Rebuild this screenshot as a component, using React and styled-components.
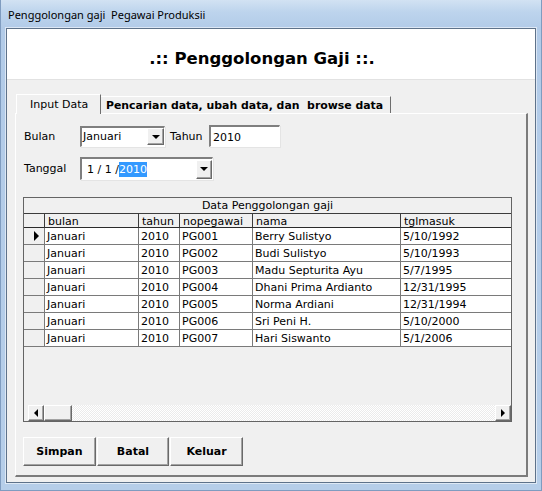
import styled, { createGlobalStyle } from 'styled-components';

const GlobalStyle = createGlobalStyle`
  html, body {
    margin: 0;
    padding: 0;
  }
  body {
    width: 542px;
    height: 491px;
    overflow: hidden;
    font-family: 'DejaVu Sans', Tahoma, sans-serif;
    color: #000;
  }
`;

const columns = [
  { key: 'ind', title: '', width: 21 },
  { key: 'bulan', title: 'bulan', width: 94 },
  { key: 'tahun', title: 'tahun', width: 41 },
  { key: 'nip', title: 'nopegawai', width: 73 },
  { key: 'nama', title: 'nama', width: 148 },
  { key: 'tgl', title: 'tglmasuk', width: 110 },
];

const rows = [
  ['Januari', '2010', 'PG001', 'Berry Sulistyo', '5/10/1992'],
  ['Januari', '2010', 'PG002', 'Budi Sulistyo', '5/10/1993'],
  ['Januari', '2010', 'PG003', 'Madu Septurita Ayu', '5/7/1995'],
  ['Januari', '2010', 'PG004', 'Dhani Prima Ardianto', '12/31/1995'],
  ['Januari', '2010', 'PG005', 'Norma Ardiani', '12/31/1994'],
  ['Januari', '2010', 'PG006', 'Sri Peni H.', '5/10/2000'],
  ['Januari', '2010', 'PG007', 'Hari Siswanto', '5/1/2006'],
];

const App = () => {
  return (
    <>
      <GlobalStyle />
      <Window>
        <TitleBar>Penggolongan gaji&nbsp; Pegawai Produksii</TitleBar>
        <Client>
          <Header>.:: Penggolongan Gaji ::.</Header>
          <TabArea>
            <TabStrip>
              <Tab $active>Input Data</Tab>
              <Tab>Pencarian data, ubah data, dan&nbsp; browse data</Tab>
            </TabStrip>
            <TabPage>
              <FieldRow $top={11}>
                <Label $w={56}>Bulan</Label>
                <Combo>
                  <FieldText>Januari</FieldText>
                  <DropButton $w={17} $h={17}>
                    <DownArrow />
                  </DropButton>
                </Combo>
                <Label $w={44} $pad={5}>Tahun</Label>
                <TextBox>2010</TextBox>
              </FieldRow>
              <FieldRow $top={10}>
                <Label $w={56}>Tanggal</Label>
                <DatePicker>
                  <FieldText $pad={5}>
                    1 / 1 /<Selected>2010</Selected>
                  </FieldText>
                  <DropButton $w={16} $h={19}>
                    <DownArrow />
                  </DropButton>
                </DatePicker>
              </FieldRow>
              <Grid>
                <Caption>Data Penggolongan gaji</Caption>
                <Cells>
                  {columns.map((c, i) => (
                    <Cell key={c.key} $kind="head" $last={i === columns.length - 1}>
                      {c.title}
                    </Cell>
                  ))}
                  {rows.map((r, ri) => (
                    <Row key={r[2]}>
                      <Cell $kind="ind">{ri === 0 && <Pointer />}</Cell>
                      {r.map((v, ci) => (
                        <Cell key={ci} $kind="data" $last={ci === r.length - 1}>
                          {v}
                        </Cell>
                      ))}
                    </Row>
                  ))}
                </Cells>
                <GridEmpty />
                <ScrollBar>
                  <ScrollButton>
                    <SideArrow $dir="left" />
                  </ScrollButton>
                  <Thumb />
                  <Track />
                  <ScrollButton>
                    <SideArrow $dir="right" />
                  </ScrollButton>
                </ScrollBar>
              </Grid>
              <ButtonRow>
                <Button $w={73}>Simpan</Button>
                <Button $w={72}>Batal</Button>
                <Button $w={73}>Keluar</Button>
              </ButtonRow>
            </TabPage>
          </TabArea>
        </Client>
      </Window>
    </>
  );
};

const Window = styled.div`
  width: 542px;
  height: 491px;
  box-sizing: border-box;
  display: flex;
  flex-direction: column;
  background: linear-gradient(180deg, #d2e2f3 0px, #bdd4ed 12px, #b2cbe8 28px, #b6cee9 100%);
  box-shadow: inset 1px 0 #7f9cc0, inset -1px 0 #7f9cc0, inset 0 -1px #7f9cc0;
`;

const TitleBar = styled.div`
  height: 28px;
  flex-shrink: 0;
  display: flex;
  align-items: center;
  padding-left: 8px;
  font-family: 'Noto Sans', 'DejaVu Sans', sans-serif;
  font-size: 11px;
  white-space: nowrap;
`;

const Client = styled.div`
  margin: 0 6px 8px 6px;
  flex: 1;
  display: flex;
  flex-direction: column;
  border: 1px solid #5e728a;
  background: #f0f0f0;
  box-shadow: 0 0 0 1px rgba(255, 255, 255, 0.55);
`;

const Header = styled.div`
  height: 51px;
  flex-shrink: 0;
  box-sizing: border-box;
  padding: 8px 18px 0 0;
  background: #fff;
  border-bottom: 1px solid #e2e2e2;
  display: flex;
  justify-content: center;
  align-items: center;
  font-size: 16.5px;
  font-weight: bold;
`;

const TabArea = styled.div`
  flex: 1;
  display: flex;
  flex-direction: column;
  padding: 14px 7px 5px 8px;
`;

const TabStrip = styled.div`
  height: 19px;
  display: flex;
  align-items: flex-end;
  padding-left: 1px;
  position: relative;
  z-index: 1;
`;

const Tab = styled.div`
  box-sizing: border-box;
  height: ${p => (p.$active ? 20 : 17)}px;
  width: ${p => (p.$active ? 85 : 290)}px;
  margin-bottom: ${p => (p.$active ? -1 : 0)}px;
  padding-left: ${p => (p.$active ? 13 : 5)}px;
  background: #f0f0f0;
  border-top: 1px solid #fff;
  border-left: ${p => (p.$active ? '1px solid #fff' : 'none')};
  border-right: 1px solid #6e6e6e;
  display: flex;
  align-items: center;
  font-size: ${p => (p.$active ? 11 : 10.9)}px;
  font-weight: ${p => (p.$active ? 'normal' : 'bold')};
  white-space: nowrap;
`;

const TabPage = styled.div`
  flex: 1;
  display: flex;
  flex-direction: column;
  border-top: 1px solid #fff;
  border-left: 1px solid #fff;
  border-right: 2px solid #7b7b7b;
  border-bottom: 2px solid #7b7b7b;
`;

const FieldRow = styled.div`
  display: flex;
  align-items: center;
  margin-top: ${p => p.$top}px;
  padding-left: 8px;
  font-size: 11px;
`;

const Label = styled.span`
  width: ${p => p.$w}px;
  padding-left: ${p => p.$pad || 0}px;
  box-sizing: border-box;
  flex-shrink: 0;
`;

const sunken = `
  box-sizing: border-box;
  background: #fff;
  border-top: 2px solid #7f7f7f;
  border-left: 2px solid #7f7f7f;
  border-right: 1px solid #fff;
  border-bottom: 1px solid #fff;
  box-shadow: 1px 1px 0 #e4e4e4;
  display: flex;
  align-items: center;
`;

const Combo = styled.div`
  ${sunken}
  width: 85px;
  height: 21px;
  justify-content: space-between;
`;

const DatePicker = styled.div`
  ${sunken}
  width: 133px;
  height: 23px;
  justify-content: space-between;
`;

const TextBox = styled.div`
  ${sunken}
  width: 71px;
  height: 22px;
  padding-left: 2px;
  padding-top: 1px;
`;

const FieldText = styled.span`
  padding-left: ${p => p.$pad || 1}px;
  white-space: pre;
`;

const Selected = styled.span`
  background: #3399ff;
  color: #fff;
  padding: 1px 0;
`;

const raised = `
  box-sizing: border-box;
  background: #f0f0f0;
  border: 1px solid;
  border-color: #fff #696969 #696969 #fff;
  box-shadow: inset -1px -1px #a3a3a3;
`;

const DropButton = styled.span`
  ${raised}
  width: ${p => p.$w}px;
  height: ${p => p.$h}px;
  flex-shrink: 0;
  display: flex;
  align-items: center;
  justify-content: center;
`;

const DownArrow = styled.span`
  width: 0;
  height: 0;
  border-left: 4px solid transparent;
  border-right: 4px solid transparent;
  border-top: 4px solid #000;
`;

const Grid = styled.div`
  width: 489px;
  height: 225px;
  margin: 17px 0 0 7px;
  box-sizing: border-box;
  display: flex;
  flex-direction: column;
  border: 1px solid #646464;
  background: #f0f0f0;
  font-size: 11px;
`;

const Caption = styled.div`
  height: 16px;
  box-sizing: border-box;
  border-bottom: 1px solid #3c3c3c;
  text-align: center;
  line-height: 16px;
  white-space: nowrap;
`;

const Cells = styled.div`
  display: grid;
  grid-template-columns: ${columns.map(c => c.width + 'px').join(' ')};
`;

const Row = styled.div`
  display: contents;
`;

const Cell = styled.div`
  box-sizing: border-box;
  height: ${p => (p.$kind === 'head' ? 14 : 17)}px;
  padding-left: ${p => (p.$kind === 'head' ? 3 : 2)}px;
  border-right: ${p => (p.$last ? 'none' : `1px solid ${p.$kind === 'head' ? '#3c3c3c' : '#7a7a7a'}`)};
  border-bottom: 1px solid ${p => (p.$kind === 'head' ? '#2a2a2a' : '#7a7a7a')};
  background: ${p => (p.$kind === 'data' ? '#fff' : '#f0f0f0')};
  line-height: ${p => (p.$kind === 'head' ? 15 : 17)}px;
  white-space: nowrap;
  overflow: hidden;
  display: ${p => (p.$kind === 'ind' ? 'flex' : 'block')};
  align-items: center;
  justify-content: center;
`;

const Pointer = styled.span`
  width: 0;
  height: 0;
  margin-left: 2px;
  border-top: 5px solid transparent;
  border-bottom: 5px solid transparent;
  border-left: 5px solid #000;
`;

const GridEmpty = styled.div`
  flex: 1;
`;

const ScrollBar = styled.div`
  height: 16px;
  margin-left: 4px;
  display: flex;
`;

const ScrollButton = styled.span`
  ${raised}
  width: 16px;
  height: 16px;
  display: flex;
  align-items: center;
  justify-content: center;
`;

const SideArrow = styled.span`
  width: 0;
  height: 0;
  border-top: 4px solid transparent;
  border-bottom: 4px solid transparent;
  ${p => (p.$dir === 'left' ? 'border-right: 4px solid #000;' : 'border-left: 4px solid #000;')}
`;

const Thumb = styled.span`
  ${raised}
  width: 28px;
  height: 16px;
`;

const Track = styled.span`
  flex: 1;
  background: repeating-conic-gradient(#ffffff 0 25%, #ebebeb 0 50%) 0 0 / 2px 2px;
`;

const ButtonRow = styled.div`
  display: flex;
  gap: 1px;
  margin: 15px 0 0 7px;
`;

const Button = styled.button`
  ${raised}
  width: ${p => p.$w}px;
  height: 29px;
  padding: 0;
  font-family: 'DejaVu Sans', Tahoma, sans-serif;
  font-size: 11px;
  font-weight: bold;
  color: #000;
`;

export default App;
